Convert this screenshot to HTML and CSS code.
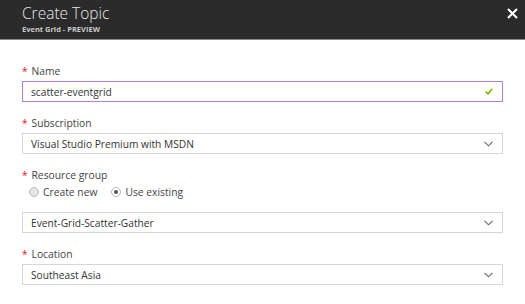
FILE: index.html
```
<!DOCTYPE html>
<html>
    <head>
        <title>Create Topic</title>
        <link rel="stylesheet" href="styles.css">
    </head>
    <body>
        <div class="header">
            <div class="titles">
                <h1>Create Topic</h1>
                <div class="subtitle">Event Grid - PREVIEW</div>
            </div>
            <svg class="close" width="11" height="11" viewBox="0 0 11 11">
                <path d="M1 1 L10 10 M10 1 L1 10" stroke="#fff" stroke-width="2"/>
            </svg>
        </div>

        <div class="form">
            <div class="field">
                <label><span class="star">*</span>Name</label>
                <div class="box valid">
                    <span>scatter-eventgrid</span>
                    <svg width="8" height="7" viewBox="0 0 8 7">
                        <polyline points="0.8,3.5 3,5.8 7.3,0.8" fill="none" stroke="#7fba00" stroke-width="1.7"/>
                    </svg>
                </div>
            </div>

            <div class="field">
                <label><span class="star">*</span>Subscription</label>
                <div class="box">
                    <span>Visual Studio Premium with MSDN</span>
                    <svg width="9" height="6" viewBox="0 0 9 6">
                        <polyline points="0.5,0.8 4.5,4.8 8.5,0.8" fill="none" stroke="#666" stroke-width="1.1"/>
                    </svg>
                </div>
            </div>

            <div class="field">
                <label><span class="star">*</span>Resource group</label>
                <div class="radios">
                    <div class="radio"><span class="dot"></span>Create new</div>
                    <div class="radio"><span class="dot checked"></span>Use existing</div>
                </div>
                <div class="box">
                    <span>Event-Grid-Scatter-Gather</span>
                    <svg width="9" height="6" viewBox="0 0 9 6">
                        <polyline points="0.5,0.8 4.5,4.8 8.5,0.8" fill="none" stroke="#666" stroke-width="1.1"/>
                    </svg>
                </div>
            </div>

            <div class="field">
                <label><span class="star">*</span>Location</label>
                <div class="box">
                    <span>Southeast Asia</span>
                    <svg width="9" height="6" viewBox="0 0 9 6">
                        <polyline points="0.5,0.8 4.5,4.8 8.5,0.8" fill="none" stroke="#666" stroke-width="1.1"/>
                    </svg>
                </div>
            </div>
        </div>
    </body>
</html>
```

FILE: styles.css
```
body {
    margin: 0;
    padding: 0;
    font-family: "Open Sans", "Noto Sans", sans-serif;
    background: #fff;
    color: #333;
}

.header {
    height: 39px;
    background: #2b2b2b;
    border-bottom: 1px solid #8a8a8a;
    display: flex;
    justify-content: space-between;
    align-items: flex-start;
    padding: 0 7px 0 22px;
}

.titles {
    padding-top: 3px;
}

h1 {
    margin: 0;
    font-size: 15.5px;
    font-weight: 300;
    line-height: 20px;
    color: #e8e8e8;
}

.subtitle {
    font-size: 7.5px;
    font-weight: 700;
    color: #c8c8c8;
    line-height: 10px;
    margin-top: 1px;
}

.close {
    margin-top: 8px;
}

.form {
    padding: 24px 22px 0 22px;
    display: flex;
    flex-direction: column;
    gap: 14px;
}

.field {
    display: flex;
    flex-direction: column;
}

label {
    font-size: 10.3px;
    line-height: 14px;
    color: #444;
    margin-bottom: 3px;
}

.star {
    color: #e81123;
    margin-right: 4px;
    font-size: 10px;
}

.box {
    height: 19px;
    border: 1px solid #d6d6d6;
    display: flex;
    justify-content: space-between;
    align-items: center;
    padding: 0 9px 0 8px;
    font-size: 10.2px;
    color: #333;
}

.box.valid {
    border-color: #b57fd0;
}

.radios {
    display: flex;
    gap: 14px;
    padding-left: 7px;
    margin-bottom: 13px;
}

.radio {
    display: flex;
    align-items: center;
    gap: 4px;
    font-size: 10.3px;
    line-height: 14px;
    color: #444;
}

.dot {
    width: 8px;
    height: 8px;
    border-radius: 50%;
    border: 1px solid #b8b8b8;
    background: #e4e4e4;
    position: relative;
}

.dot.checked {
    background: #fff;
}

.dot.checked::after {
    content: "";
    position: absolute;
    left: 2px;
    top: 2px;
    width: 4px;
    height: 4px;
    border-radius: 50%;
    background: #555;
}
```
